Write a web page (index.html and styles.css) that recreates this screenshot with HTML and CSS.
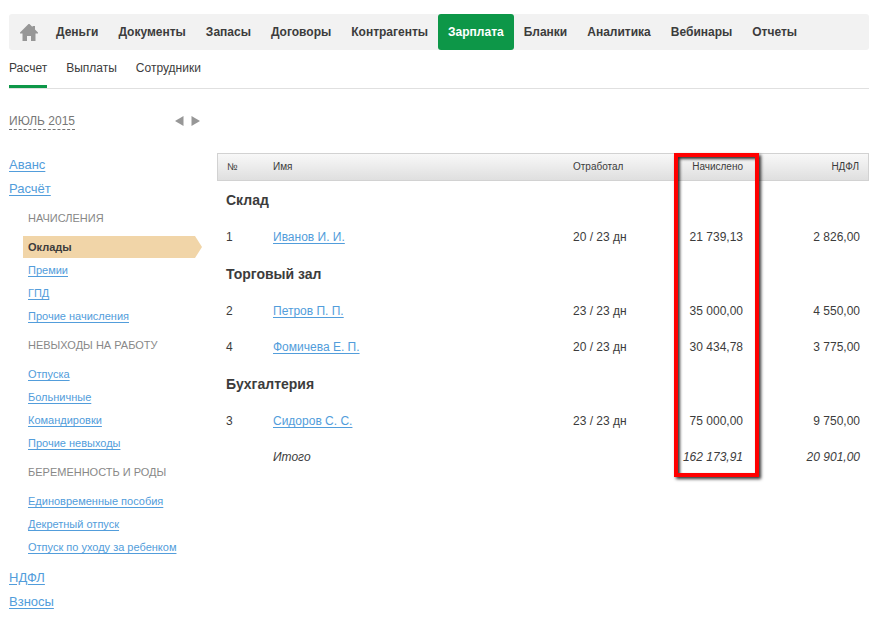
FILE: index.html
```html
<!DOCTYPE html>
<html lang="ru">
<head>
<meta charset="utf-8">
<meta name="viewport" content="width=device-width, initial-scale=1">
<title>Зарплата</title>
<link rel="stylesheet" href="styles.css">
</head>
<body>
<header>
  <nav class="topnav">
    <a class="home" href="#" aria-label="Главная"><svg viewBox="0 0 18 17" width="18" height="17"><path d="M8.5 0 H9.5 L12.5 3 V2 H15 V5.5 L18 8.5 V9.5 H15.5 V17 H11 V12 H7 V17 H2.5 V9.5 H0 V8.5 Z"/></svg></a>
    <a href="#">Деньги</a>
    <a href="#">Документы</a>
    <a href="#">Запасы</a>
    <a href="#">Договоры</a>
    <a href="#">Контрагенты</a>
    <a class="active" href="#">Зарплата</a>
    <a href="#">Бланки</a>
    <a href="#">Аналитика</a>
    <a href="#">Вебинары</a>
    <a href="#">Отчеты</a>
  </nav>
  <nav class="subnav">
    <a class="active" href="#">Расчет</a>
    <a href="#">Выплаты</a>
    <a href="#">Сотрудники</a>
  </nav>
</header>
<div class="layout">
  <aside class="sidebar">
    <div class="period">
      <button class="month" type="button">ИЮЛЬ 2015</button>
      <span class="arrows">
        <button type="button" aria-label="Предыдущий месяц"><svg viewBox="0 0 9 10" width="9" height="10"><path d="M8.5 0 V10 L0 5 Z"/></svg></button>
        <button type="button" aria-label="Следующий месяц"><svg viewBox="0 0 9 10" width="9" height="10"><path d="M0.5 0 V10 L9 5 Z"/></svg></button>
      </span>
    </div>
    <ul class="menu">
      <li><a href="#">Аванс</a></li>
      <li><a href="#">Расчёт</a></li>
    </ul>
    <div class="submenu">
      <h2>НАЧИСЛЕНИЯ</h2>
      <ul>
        <li class="current">Оклады</li>
        <li><a href="#">Премии</a></li>
        <li><a href="#">ГПД</a></li>
        <li><a href="#">Прочие начисления</a></li>
      </ul>
      <h2>НЕВЫХОДЫ НА РАБОТУ</h2>
      <ul>
        <li><a href="#">Отпуска</a></li>
        <li><a href="#">Больничные</a></li>
        <li><a href="#">Командировки</a></li>
        <li><a href="#">Прочие невыходы</a></li>
      </ul>
      <h2>БЕРЕМЕННОСТЬ И РОДЫ</h2>
      <ul>
        <li><a href="#">Единовременные пособия</a></li>
        <li><a href="#">Декретный отпуск</a></li>
        <li><a href="#">Отпуск по уходу за ребенком</a></li>
      </ul>
    </div>
    <ul class="menu">
      <li><a href="#">НДФЛ</a></li>
      <li><a href="#">Взносы</a></li>
    </ul>
  </aside>
  <main class="content">
    <div class="table-wrap">
      <table>
        <colgroup><col class="c-num"><col><col class="c-days"><col class="c-sum"><col class="c-tax"></colgroup>
        <thead>
          <tr><th scope="col">№</th><th scope="col">Имя</th><th scope="col">Отработал</th><th scope="col" class="num">Начислено</th><th scope="col" class="num">НДФЛ</th></tr>
        </thead>
        <tbody>
          <tr class="group"><th colspan="5">Склад</th></tr>
          <tr><td>1</td><td><a href="#">Иванов И. И.</a></td><td>20 / 23 дн</td><td class="num">21 739,13</td><td class="num">2 826,00</td></tr>
          <tr class="group"><th colspan="5">Торговый зал</th></tr>
          <tr><td>2</td><td><a href="#">Петров П. П.</a></td><td>23 / 23 дн</td><td class="num">35 000,00</td><td class="num">4 550,00</td></tr>
          <tr><td>4</td><td><a href="#">Фомичева Е. П.</a></td><td>20 / 23 дн</td><td class="num">30 434,78</td><td class="num">3 775,00</td></tr>
          <tr class="group"><th colspan="5">Бухгалтерия</th></tr>
          <tr><td>3</td><td><a href="#">Сидоров С. С.</a></td><td>23 / 23 дн</td><td class="num">75 000,00</td><td class="num">9 750,00</td></tr>
        </tbody>
        <tfoot>
          <tr><td></td><td>Итого</td><td></td><td class="num">162 173,91</td><td class="num">20 901,00</td></tr>
        </tfoot>
      </table>
      <div class="marker"></div>
    </div>
  </main>
</div>
</body>
</html>
```
FILE: styles.css
```css
* { box-sizing: border-box; }
body {
  margin: 0;
  padding: 14px 12px 0 9px;
  background: #fff;
  color: #3c3c3c;
  font: 12px/16px "Liberation Sans", Arial, sans-serif;
}
ul, h2 { margin: 0; padding: 0; list-style: none; }
a { color: #529ddb; text-underline-offset: 2px; }
button { padding: 0; border: 0; background: none; font: inherit; cursor: pointer; }
svg { display: block; fill: #979797; }

/* Top navigation */
.topnav {
  display: flex;
  height: 36px;
  border-radius: 3px;
  background: #f2f2f2;
}
.topnav a {
  display: flex;
  align-items: center;
  padding: 0 10px;
  border-radius: 3px;
  color: #3c3c3c;
  font-weight: bold;
  text-decoration: none;
}
.topnav .home { padding: 0 8px 0 11px; }
.topnav .active { background: #0d9748; color: #fff; }
.subnav {
  display: flex;
  gap: 19px;
  height: 39px;
  border-bottom: 1px solid #e0e0e0;
}
.subnav a {
  padding-top: 10px;
  color: #3c3c3c;
  text-decoration: none;
}
.subnav .active { border-bottom: 3px solid #0d9748; }

.layout { display: grid; grid-template-columns: 208px 1fr; }

/* Sidebar */
.sidebar { padding-top: 20px; }
.period {
  display: flex;
  align-items: center;
  justify-content: space-between;
  height: 24px;
  margin: 0 17px 20px 0;
}
.month {
  border-bottom: 1px dashed #777;
  color: #777;
}
.arrows { display: flex; gap: 7px; }
.menu { font-size: 13px; line-height: 24px; }
.submenu { padding: 0 15px 7px 14px; font-size: 11px; }
.submenu h2 {
  padding-left: 5px;
  color: #888;
  font-size: 11px;
  font-weight: normal;
  line-height: 35px;
}
.submenu li { padding-left: 5px; line-height: 23px; }
.submenu .current {
  margin-bottom: 1px;
  background: #f1d5a8;
  clip-path: polygon(0 0, 172px 0, 100% 50%, 172px 100%, 0 100%);
  font-weight: bold;
  line-height: 22px;
}

/* Payroll table */
.content { padding-top: 64px; }
.table-wrap { position: relative; }
table {
  width: 100%;
  border-collapse: separate;
  border-spacing: 0;
  table-layout: fixed;
}
.c-num { width: 47px; }
.c-days { width: 109px; }
.c-sum { width: 79px; }
.c-tax { width: 117px; }
th, td { height: 36px; padding: 0 9px; text-align: left; white-space: nowrap; }
thead th {
  height: 28px;
  border: solid #d2d2d2;
  border-width: 1px 0;
  background: linear-gradient(#f8f8f8, #dfdfdf);
  font-size: 10px;
  font-weight: normal;
}
thead th:first-child { border-left-width: 1px; }
thead th:last-child { border-right-width: 1px; }
.num { text-align: right; }
.group th { height: 38px; font-size: 14px; }
tfoot { font-style: italic; }

/* Frame around the accrual column */
.marker {
  position: absolute;
  top: 0;
  right: 110px;
  bottom: -2px;
  width: 85px;
  border: 4px solid #f00;
  box-shadow: 2px 2px 3px rgba(0, 0, 0, .8), inset 2px 2px 3px rgba(0, 0, 0, .8);
  pointer-events: none;
}
```
